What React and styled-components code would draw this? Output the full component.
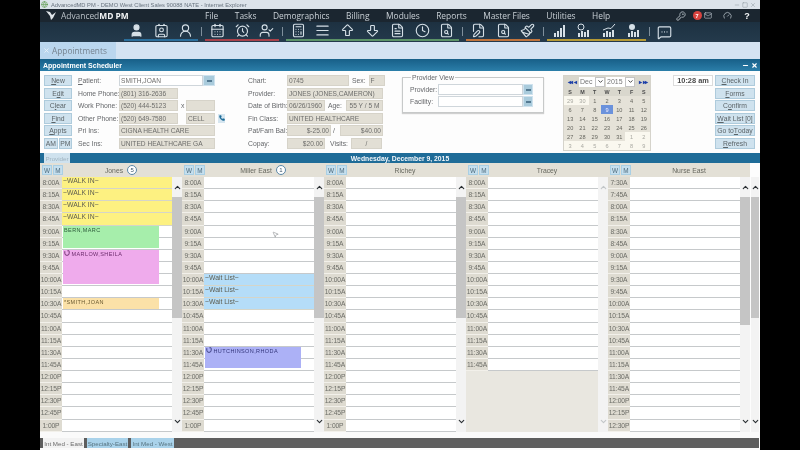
import React from "react";
import styled, { createGlobalStyle } from "styled-components";
import {
  User, Contact, UserRound, CalendarDays, AlarmClock, UserCheck, Calculator, AlignJustify,
  ArrowBigUp, ArrowBigDown, FileText, Clock, FileSearch, FilePen, Paintbrush, MessageSquareMore,
  KeyRound, Mail, Gauge, ChevronUp, ChevronDown, Phone, MousePointer2, Minus, X, Square, Globe,
} from "lucide-react";

const Global = createGlobalStyle`
  html, body { margin: 0; padding: 0; background: #000; overflow: hidden; }
  * { box-sizing: border-box; }
`;

const Screen = styled.div`
  width: 800px; height: 450px; background: #000; display: flex; justify-content: center;
  font-family: "Liberation Sans", Arial, sans-serif;
  filter: blur(0.45px);
`;
const Window = styled.div`
  width: 720px; height: 450px; background: #fdfdfd; display: flex; flex-direction: column; position: relative; overflow: hidden;
`;
const TitleBar = styled.div`
  height: 9px; background: #dce3ea; display: flex; align-items: center; padding: 0 2px 0 1px; gap: 3px;
  font-size: 5.75px; color: #67727e;
`;
const TitleText = styled.span` flex: 1; white-space: nowrap; `;
const WinControls = styled.div`
  display: flex; gap: 2px; color: #8d969e; padding-right: 2px;
`;
const Nav = styled.div`
  height: 13px; background: #1b2630; display: flex; align-items: center; color: #c9d0d6; font-size: 9px; position: relative;
  padding-left: 6px;
`;
const Logo = styled.div`
  width: 159px; display: flex; align-items: center; gap: 5px; font-family: "Open Sans", sans-serif; font-size: 8.4px; color: #b9c0c7; white-space: nowrap;
  b { color: #f2f4f5; font-weight: 700; }
`;
const NavItems = styled.div` display: flex; gap: 16.5px; font-family: "Open Sans", sans-serif; font-size: 8.4px; `;
const NavTools = styled.div`
  display: flex; align-items: center; margin-left: auto; padding-right: 8px; color: #b7c0c8;
`;
const NavTool = styled.span`
  width: ${p => p.$w}px; display: flex; justify-content: center; align-items: center; font-weight: 700; font-size: 9px; color: ${p => p.$bright ? "#f4f6f7" : "inherit"};
`;
const Badge = styled.span`
  width: 9px; height: 9px; border-radius: 50%; background: #d8433f; color: #fff; font-size: 5.5px; display: flex; align-items: center; justify-content: center;
`;
const Toolbar = styled.div`
  height: 20px; background: linear-gradient(#1d3141, #243a4c); display: flex; padding-left: 84px; color: #c9d5de;
`;
const Group = styled.div`
  display: flex; height: 19px; border-bottom: 2px solid ${p => p.$c};
`;
const ToolIcon = styled.div`
  width: 24.8px; display: flex; align-items: center; justify-content: center; color: #d6e0e7;
`;
const Sep = styled.div`
  width: 6.5px; display: flex; justify-content: center; padding: 5px 0 6px;
  &::before { content: ""; width: 1px; background: #7f8f9c; }
`;
const TabStrip = styled.div`
  height: 17px; background: #d4e3f2; display: flex;
`;
const ActiveTab = styled.div`
  width: 76px; background: #bad6ee; display: flex; align-items: center; padding-left: 3px; gap: 2px; font-family: "Open Sans", sans-serif; font-size: 8.3px; color: #75828e;
  svg { color: #e8f1f8; }
`;
const PanelHeader = styled.div`
  height: 12px; background: linear-gradient(#175f88, #2b7ea9); color: #fff; font-weight: 700; font-size: 7px; display: flex; align-items: center; justify-content: space-between; padding: 0 2px 0 3px;
`;
const PanelBtns = styled.div` display: flex; gap: 2px; align-items: center; `;
const Form = styled.div`
  height: 82px; display: flex; padding: 4px 0 0 4px; background: #fdfdfd; font-size: 6.8px; color: #66686b;
`;
const BtnColumn = styled.div`
  width: ${p => p.$w || 28}px; margin-left: ${p => p.$ml || 0}px; display: flex; flex-direction: column; gap: 1.6px;
`;
const Btn = styled.div`
  height: 11px; flex: ${p => p.$flex ? 1 : "none"}; background: #cfe2ee; border: 1px solid #aecbdc; display: flex; align-items: center; justify-content: center; color: #5c6468; font-size: 6.8px; white-space: nowrap;
  u { text-decoration: underline; }
`;
const AmPm = styled.div` display: flex; gap: 1px; `;
const Section = styled.div`
  width: ${p => p.$w}px; margin-left: ${p => p.$ml}px; display: flex; flex-direction: column; gap: 1.6px;
`;
const Row = styled.div`
  height: 11px; display: flex; align-items: center; white-space: nowrap;
`;
const Label = styled.span`
  width: ${p => p.$w}px; flex: none;
`;
const Field = styled.div`
  width: ${p => p.$w}px; height: 11px; flex: none; margin-left: ${p => p.$ml || 0}px; background: ${p => p.$white ? "#fff" : "#e2dfd5"}; border: 1px solid ${p => p.$white ? "#cfd6db" : "#d6d3c9"};
  padding: 0 1px; font-size: 6.6px; color: #6d6d6b; display: flex; align-items: center; white-space: nowrap; overflow: hidden;
  justify-content: ${p => p.$align || "flex-start"};
`;
const Picker = styled.div`
  width: ${p => p.$w || 12}px; height: 11px; flex: none; background: #a9cbdc; border: 1px solid #cfe2ee; display: flex; align-items: center; justify-content: center; color: #547a92;
  &::before { content: ""; width: 5px; height: 2px; background: currentColor; }
`;
const Inline = styled.span`
  margin-left: ${p => p.$ml}px; width: ${p => p.$w || "auto"}; flex: none;
`;
const PhoneBtn = styled.div`
  width: 8px; height: 9px; margin-left: 3px; background: #d6e6f0; color: #1f6c98; display: flex; align-items: center; justify-content: center;
`;
const Fieldset = styled.div`
  width: 142px; height: 36px; margin: 2px 0 0 19px; border: 1px solid #c7c9c9; box-shadow: 0 1px 1px #d0d0d0; padding: 6px 0 0 7px; position: relative; display: flex; flex-direction: column; gap: 1px;
`;
const Legend = styled.span`
  position: absolute; left: 8px; top: -4px; background: #fdfdfd; padding: 0 1px; font-size: 6.8px;
`;
const Calendar = styled.div`
  width: 88px; height: 76px; margin-left: 19px; background: #e5e2d8; border: 1px solid #d5d3cb; display: flex; flex-direction: column; font-size: 5.6px;
`;
const CalHead = styled.div`
  height: 11px; background: #d9d7cd; display: flex; align-items: center; color: #1c3fa8; font-size: 6px; font-weight: 700; padding-left: 1px;
`;
const CalArrows = styled.span` width: ${p => p.$w}px; flex: none; text-align: center; letter-spacing: -0.5px; `;
const CalSelect = styled.div`
  width: ${p => p.$w}px; height: 10px; flex: none; background: #fff; color: #777; font-weight: 400; font-size: 7px; display: flex; align-items: center; padding-left: 1px; margin-right: 1px; position: relative;
`;
const CalDrop = styled.span`
  position: absolute; right: 0; top: 0; width: 10px; height: 10px; border: 1px solid #c4c4c4; background: #fff; color: #333; display: flex; align-items: center; justify-content: center;
`;
const CalGrid = styled.div`
  flex: 1; display: grid; grid-template-columns: repeat(7, 1fr); grid-auto-rows: 1fr;
`;
const DayName = styled.div`
  display: flex; align-items: center; justify-content: center; background: #d9d7cd; font-weight: 700; color: #4b4b4b; font-size: 5.4px;
`;
const Day = styled.div`
  display: flex; align-items: center; justify-content: center; color: ${p => p.$sel ? "#eef" : p.$out ? "#a9a9a2" : "#66665f"}; background: ${p => p.$sel ? "#6b92dc" : p.$out ? "#faf8ef" : "#e5e2d8"};
`;
const TimeBox = styled.div`
  width: 40px; height: 11px; margin-left: 22px; border: 1px solid #dcdcdc; background: #fff; color: #4a4a4a; font-weight: 700; font-size: 7.4px; display: flex; align-items: center; justify-content: center; white-space: nowrap;
`;
const DateBar = styled.div`
  height: 10px; background: #1f6c98; color: #f3f7fa; font-weight: 700; font-size: 6.8px; display: flex; align-items: center; justify-content: center; position: relative;
`;
const ProviderTab = styled.div`
  position: absolute; left: 4px; top: 0; width: 26px; height: 10px; background: #cfe2ee; color: #9fb4c0; font-weight: 400; font-size: 6.2px; display: flex; align-items: center; justify-content: center;
`;
const Heads = styled.div` height: 14px; display: flex; `;
const Head = styled.div`
  width: 142px; flex: none; background: #e3e0d6; display: flex; align-items: center; padding-left: 2px; font-size: 6.8px; color: #67685f;
`;
const WM = styled.div`
  width: 10px; height: 10px; margin-right: 1px; background: #c5dfee; border: 1px solid #a9cfe4; color: #4e6b7c; font-size: 6.4px; display: flex; align-items: center; justify-content: center;
`;
const HeadName = styled.div`
  flex: 1; display: flex; align-items: center; justify-content: center; gap: 4px; padding-right: 4px;
`;
const Count = styled.span`
  width: 10px; height: 10px; border-radius: 50%; border: 1.2px solid #5a87a6; background: #fff; color: #3b5568; font-size: 6px; display: flex; align-items: center; justify-content: center;
`;
const GridArea = styled.div` height: 255px; display: flex; `;
const Col = styled.div` width: 142px; flex: none; display: flex; `;
const Times = styled.div` width: 22px; flex: none; display: flex; flex-direction: column; background: ${p => p.$empty ? "#e9e7e0" : "#dedbd1"}; `;
const TimeCell = styled.div`
  height: 12.14px; flex: none; background: #dedbd1; border-bottom: 1px solid #f2f0ea; font-size: 6.7px; color: #6b6c66; display: flex; align-items: center; justify-content: center; white-space: nowrap; letter-spacing: -0.1px;
`;
const Slots = styled.div` width: 110px; flex: none; background: ${p => p.$empty ? "#e9e7e0" : "#fff"}; display: flex; flex-direction: column; position: relative; `;
const Slot = styled.div`
  height: 12.14px; flex: none; background: ${p => p.$bg || "#fff"}; border-bottom: 1px solid ${p => p.$bg ? "#d5d5c8" : "#c6c9cb"}; font-size: 6.8px; color: #5d5d50; padding-left: 1px; display: flex; align-items: flex-start; line-height: 8px; white-space: nowrap;
`;
const Appt = styled.div`
  position: absolute; left: 1px; width: 96px; background: ${p => p.$bg}; color: ${p => p.$c}; font-size: 5.5px; letter-spacing: 0.4px; line-height: 8px; padding-left: 1px; white-space: nowrap; display: flex; gap: 1.5px; align-items: flex-start;
  top: ${p => p.$top}px; height: ${p => p.$h}px;
`;
const Scroll = styled.div`
  width: ${p => p.$w || 10}px; flex: none; margin-left: ${p => p.$ml || 0}px; background: #f3f3f3; display: flex; flex-direction: column; align-items: center; justify-content: space-between; color: ${p => p.$off ? "#c2c6c8" : "#2a2f33"}; position: relative;
`;
const Arrow = styled.div` height: 20px; display: flex; align-items: center; justify-content: center; `;
const ArrowDown = styled(Arrow)` height: 22px; `;
const Thumb = styled.div` position: absolute; left: 0; top: 20px; width: 100%; height: ${p => p.$h}px; background: #c5c5c5; `;
const Cursor = styled.div` position: absolute; left: 68px; top: 47px; color: #8b8f93; `;
const Gap = styled.div` height: 6px; background: #fafafa; `;
const BottomBar = styled.div`
  height: 10px; width: 719px; background: #5d5d5d; display: flex; padding-left: 3px; gap: 3px; font-size: 6.2px;
`;
const BottomTab = styled.div`
  width: ${p => p.$w}px; display: flex; align-items: center; justify-content: center; white-space: nowrap; background: ${p => p.$on ? "#f2f2f2" : "#a9d2ea"}; color: ${p => p.$on ? "#6a6a6a" : "#55727f"};
`;
const Foot = styled.div` height: 2px; background: #fafafa; `;

const BarsIcon = ({ extra }) => (
  <svg width="15" height="15" viewBox="0 0 15 15" fill="currentColor">
    <rect x="2" y="10" width="2" height="4" /><rect x="5" y="8" width="2" height="6" />
    <rect x="8" y={extra ? 9 : 5} width="2" height={extra ? 5 : 9} /><rect x="11" y={extra ? 7 : 2} width="2" height={extra ? 7 : 12} />
    {extra === "dollar" && <circle cx="5" cy="4" r="3" fill="none" stroke="currentColor" />}
    {extra === "trend" && <path d="M2 7 L7 5 L10 5.5 L14 1" fill="none" stroke="currentColor" />}
    {extra === "dot" && <circle cx="6" cy="4" r="3" />}
  </svg>
);

const ApptMark = () => (
  <svg width="6" height="6" viewBox="0 0 6 6" fill="none" stroke="currentColor" strokeWidth="0.9">
    <path d="M0.8 1.2 V3.2 A2.2 2.2 0 0 0 5.2 3.2 V1.2 M3.4 0.8 H5.2" />
  </svg>
);

const T = (h, m, s) => `${h}:${String(m).padStart(2, "0")}${s}`;
const buildTimes = (startMin, n) => Array.from({ length: n }, (_, i) => {
  const t = startMin + i * 15;
  const hr = Math.floor(t / 60);
  return T(hr > 12 ? hr - 12 : hr, t % 60, hr >= 12 ? "P" : "A");
});

const YEL = "#fdf181", BLU = "#b5ddf8";
const RH = 12.14;
const columns = [
  { name: "Jones", count: "5", start: 480, n: 21,
    fills: { 0: [YEL, "~WALK IN~"], 1: [YEL, "~WALK IN~"], 2: [YEL, "~WALK IN~"], 3: [YEL, "~WALK IN~"] },
    appts: [
      { row: 4, h: 22, bg: "#a6eeab", c: "#2c5a3a", text: "BERN,MARC" },
      { row: 6, h: 34, bg: "#efabec", c: "#6a2a6a", text: "MARLOW,SHEILA", mark: true },
      { row: 10, h: 11, bg: "#fbe1a8", c: "#6a5a30", text: "*SMITH,JOAN" },
    ], thumb: 121 },
  { name: "Miller East", count: "1", start: 480, n: 21,
    fills: { 8: [BLU, "~Wait List~"], 9: [BLU, "~Wait List~"], 10: [BLU, "~Wait List~"] },
    appts: [{ row: 14, h: 21, bg: "#acb1f6", c: "#33357a", text: "HUTCHINSON,RHODA", mark: true }], thumb: 121, cursor: true },
  { name: "Richey", start: 480, n: 21, fills: {}, appts: [], thumb: 121 },
  { name: "Tracey", start: 480, n: 16, fills: {}, appts: [], off: true },
  { name: "Nurse East", start: 450, n: 21, fills: {}, appts: [], thumb: 128 },
];

const days = [
  [29, 1], [30, 1], [1], [2], [3], [4], [5], [6], [7], [8], [9, 0, 1], [10], [11], [12], [13], [14], [15], [16], [17], [18], [19],
  [20], [21], [22], [23], [24], [25], [26], [27], [28], [29], [30], [31], [1, 1], [2, 1], [3, 1], [4, 1], [5, 1], [6, 1], [7, 1], [8, 1], [9, 1],
];

const DayColumn = ({ col }) => {
  const times = buildTimes(col.start, col.n);
  const empty = col.n < 21;
  return (
    <Col>
      <Times $empty={empty}>{times.map(t => <TimeCell key={t}>{t}</TimeCell>)}</Times>
      <Slots $empty={empty}>
        {times.map((t, i) => {
          const f = col.fills[i];
          return <Slot key={t} $bg={f && f[0]}>{f && f[1]}</Slot>;
        })}
        {col.appts.map(a => (
          <Appt key={a.text} $top={a.row * RH} $h={a.h} $bg={a.bg} $c={a.c}>
            {a.mark && <ApptMark />}
            <span>{a.text}</span>
          </Appt>
        ))}
        {col.cursor && <Cursor><MousePointer2 size={7} /></Cursor>}
      </Slots>
      <Scroll $off={col.off}>
        {col.thumb && <Thumb $h={col.thumb} />}
        <Arrow><ChevronUp size={9} strokeWidth={3} /></Arrow>
        <ArrowDown><ChevronDown size={9} strokeWidth={3} /></ArrowDown>
      </Scroll>
    </Col>
  );
};

export default function App() {
  const ic = { size: 15, strokeWidth: 1.8 };
  return (
    <Screen>
      <Global />
      <Window>
        <TitleBar>
          <Globe size={7} color="#5a9a4a" />
          <TitleText>AdvancedMD PM - DEMO West Client Sales 90088 NATE - Internet Explorer</TitleText>
          <WinControls><Minus size={6} /><Square size={6} /><X size={6} /></WinControls>
        </TitleBar>
        <Nav>
          <Logo>
            <svg width="10" height="9" viewBox="0 0 10 9" fill="#dfe4e8"><path d="M0 0 L4 1 L6 4 L10 1 L7 7 L5 9 L4 5 Z" /></svg>
            <span>Advanced<b>MD PM</b></span>
          </Logo>
          <NavItems>
            <span>File</span><span>Tasks</span><span>Demographics</span><span>Billing</span><span>Modules</span><span>Reports</span><span>Master Files</span><span>Utilities</span><span>Help</span>
          </NavItems>
          <NavTools>
            <NavTool $w={18}><KeyRound size={10} /></NavTool>
            <NavTool $w={14}><Badge>7</Badge></NavTool>
            <NavTool $w={8}><Mail size={9} /></NavTool>
            <NavTool $w={30}><Gauge size={9} /></NavTool>
            <NavTool $w={10} $bright>?</NavTool>
          </NavTools>
        </Nav>
        <Toolbar>
          <Group $c="#2b6f9c">
            <ToolIcon><User {...ic} fill="currentColor" /></ToolIcon>
            <ToolIcon><Contact {...ic} /></ToolIcon>
            <ToolIcon><UserRound {...ic} /></ToolIcon>
          </Group>
          <Sep />
          <Group $c="#a8424a">
            <ToolIcon><CalendarDays {...ic} /></ToolIcon>
            <ToolIcon><AlarmClock {...ic} /></ToolIcon>
            <ToolIcon><UserCheck {...ic} /></ToolIcon>
          </Group>
          <Sep />
          <Group $c="#5c9468">
            <ToolIcon><Calculator {...ic} /></ToolIcon>
            <ToolIcon><AlignJustify {...ic} /></ToolIcon>
            <ToolIcon><ArrowBigUp {...ic} /></ToolIcon>
            <ToolIcon><ArrowBigDown {...ic} /></ToolIcon>
            <ToolIcon><FileText {...ic} /></ToolIcon>
            <ToolIcon><Clock {...ic} /></ToolIcon>
            <ToolIcon><FileSearch {...ic} /></ToolIcon>
          </Group>
          <Sep />
          <Group $c="#c0743c">
            <ToolIcon><FilePen {...ic} /></ToolIcon>
            <ToolIcon><FileSearch {...ic} /></ToolIcon>
            <ToolIcon><Paintbrush {...ic} /></ToolIcon>
          </Group>
          <Sep />
          <Group $c="#b59a35">
            <ToolIcon><BarsIcon /></ToolIcon>
            <ToolIcon><BarsIcon extra="dollar" /></ToolIcon>
            <ToolIcon><BarsIcon extra="trend" /></ToolIcon>
            <ToolIcon><BarsIcon extra="dot" /></ToolIcon>
          </Group>
          <Sep />
          <ToolIcon><MessageSquareMore {...ic} /></ToolIcon>
        </Toolbar>
        <TabStrip>
          <ActiveTab><X size={7} strokeWidth={3} />Appointments</ActiveTab>
        </TabStrip>
        <PanelHeader>
          <span>Appointment Scheduler</span>
          <PanelBtns><Minus size={7} strokeWidth={4} /><X size={7} strokeWidth={4} /></PanelBtns>
        </PanelHeader>
        <Form>
          <BtnColumn>
            <Btn><u>N</u>ew</Btn>
            <Btn>E<u>d</u>it</Btn>
            <Btn>C<u>l</u>ear</Btn>
            <Btn><u>F</u>ind</Btn>
            <Btn><u>A</u>ppts</Btn>
            <AmPm><Btn $flex>AM</Btn><Btn $flex>PM</Btn></AmPm>
          </BtnColumn>
          <Section $w={147} $ml={6}>
            <Row><Label $w={41}><u>P</u>atient:</Label><Field $w={84} $white>SMITH,JOAN</Field><Picker /></Row>
            <Row><Label $w={41}>Home Phone:</Label><Field $w={59}>(801) 316-2636</Field></Row>
            <Row><Label $w={41}>Work Phone:</Label><Field $w={59}>(520) 444-5123</Field><Inline $ml={3} $w="5px">x</Inline><Field $w={29}></Field></Row>
            <Row><Label $w={41}>Other Phone:</Label><Field $w={59}>(520) 649-7580</Field><Field $w={29} $ml={8}>CELL</Field><PhoneBtn><Phone size={6} fill="currentColor" /></PhoneBtn></Row>
            <Row><Label $w={41}>Pri Ins:</Label><Field $w={96}>CIGNA HEALTH CARE</Field></Row>
            <Row><Label $w={41}>Sec Ins:</Label><Field $w={96}>UNITED HEALTHCARE GA</Field></Row>
          </Section>
          <Section $w={135} $ml={23}>
            <Row><Label $w={39}>Chart:</Label><Field $w={62}>0745</Field><Inline $ml={3}>Sex:</Inline><Field $w={16} $ml={3}>F</Field></Row>
            <Row><Label $w={39}>Provider:</Label><Field $w={96}>JONES (JONES,CAMERON)</Field></Row>
            <Row><Label $w={39}>Date of Birth:</Label><Field $w={38}>06/26/1960</Field><Inline $ml={3}>Age:</Inline><Field $w={37} $ml={4} $align="center">55 Y / 5 M</Field></Row>
            <Row><Label $w={39}>Fin Class:</Label><Field $w={96}>UNITED HEALTHCARE</Field></Row>
            <Row><Label $w={39}>Pat/Fam Bal:</Label><Field $w={44} $align="flex-end">$-25.00</Field><Inline $ml={2} $w="7px">/</Inline><Field $w={43} $align="flex-end">$40.00</Field></Row>
            <Row><Label $w={39}>Copay:</Label><Field $w={38} $align="flex-end">$20.00</Field><Inline $ml={5}>Visits:</Inline><Field $w={31} $ml={3} $align="center">/</Field></Row>
          </Section>
          <Fieldset>
            <Legend>Provider View</Legend>
            <Row><Label $w={28}>Provider:</Label><Field $w={85} $white /><Picker $w={10} /></Row>
            <Row><Label $w={28}>Facility:</Label><Field $w={85} $white /><Picker $w={10} /></Row>
          </Fieldset>
          <Calendar>
            <CalHead>
              <CalArrows $w={14}>◂◂ ◂</CalArrows>
              <CalSelect $w={26}>Dec<CalDrop><ChevronDown size={7} strokeWidth={3} /></CalDrop></CalSelect>
              <CalSelect $w={29}>2015<CalDrop><ChevronDown size={7} strokeWidth={3} /></CalDrop></CalSelect>
              <CalArrows $w={15}>▸ ▸▸</CalArrows>
            </CalHead>
            <CalGrid>
              {["S", "M", "T", "W", "T", "F", "S"].map((d, i) => <DayName key={i}>{d}</DayName>)}
              {days.map(([d, out, sel], i) => <Day key={i} $out={out} $sel={sel}>{d}</Day>)}
            </CalGrid>
          </Calendar>
          <TimeBox>10:28 am</TimeBox>
          <BtnColumn $w={40} $ml={2}>
            <Btn><u>C</u>heck In</Btn>
            <Btn><u>F</u>orms</Btn>
            <Btn>C<u>o</u>nfirm</Btn>
            <Btn><u>W</u>ait List [0]</Btn>
            <Btn>Go to <u>T</u>oday</Btn>
            <Btn><u>R</u>efresh</Btn>
          </BtnColumn>
        </Form>
        <DateBar>
          <ProviderTab>Provider</ProviderTab>
          Wednesday, December 9, 2015
        </DateBar>
        <Heads>
          {columns.map(c => (
            <Head key={c.name}>
              <WM>W</WM><WM>M</WM>
              <HeadName>{c.name}{c.count && <Count>{c.count}</Count>}</HeadName>
            </Head>
          ))}
        </Heads>
        <GridArea>
          {columns.map(c => <DayColumn key={c.name} col={c} />)}
          <Scroll $ml={1} $w={8}>
            <Thumb $h={121} />
            <Arrow><ChevronUp size={9} strokeWidth={3} /></Arrow>
            <ArrowDown><ChevronDown size={9} strokeWidth={3} /></ArrowDown>
          </Scroll>
        </GridArea>
        <Gap />
        <BottomBar>
          <BottomTab $on $w={41}>Int Med - East</BottomTab>
          <BottomTab $w={41}>Specialty-East</BottomTab>
          <BottomTab $w={43}>Int Med - West</BottomTab>
        </BottomBar>
        <Foot />
      </Window>
    </Screen>
  );
}
